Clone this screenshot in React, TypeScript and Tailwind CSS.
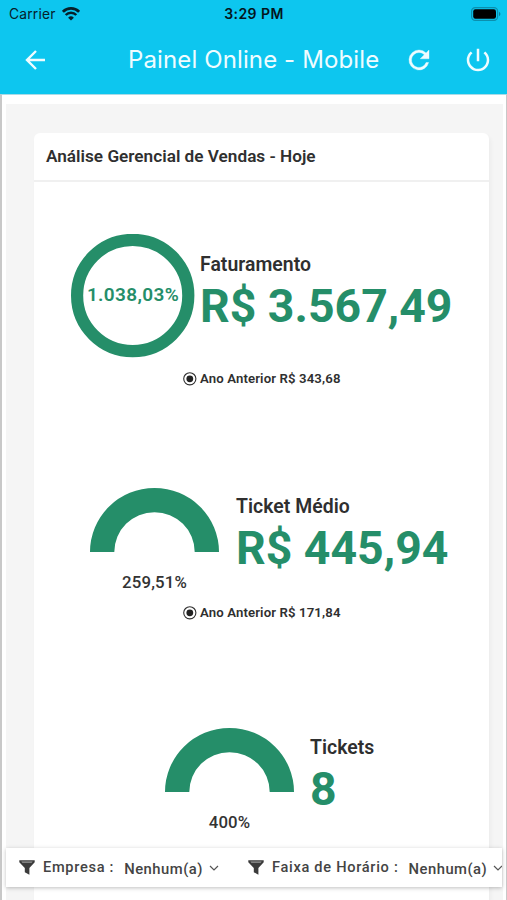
import type { ReactNode } from "react";
import { clsx } from "clsx";

const WifiIcon = () => (
  <svg className="w-[18px] h-[14px]" viewBox="0 0 18 14" fill="none" stroke="#06202a">
    <path d="M0.9 4.8a11.5 11.5 0 0 1 16.2 0" strokeWidth="2.8" />
    <path d="M3.7 8a7.4 7.4 0 0 1 10.6 0" strokeWidth="2.5" />
    <path d="M9 13.6 6.1 10.7a4.1 4.1 0 0 1 5.8 0z" fill="#06202a" stroke="none" />
  </svg>
);

const BatteryIcon = () => (
  <svg className="w-[30px] h-[14px]" viewBox="0 0 30 14">
    <rect x="0.6" y="0.6" width="26" height="12.8" rx="3.6" fill="none" stroke="#0b8fae" strokeWidth="1.2" />
    <rect x="2.2" y="2.2" width="22.8" height="9.6" rx="2.2" fill="#000" />
    <path d="M28 4.8c1.9.8 1.9 3.6 0 4.4z" fill="#0b7f9b" />
  </svg>
);

const FilterIcon = () => (
  <svg className="w-4 h-[15px] shrink-0" viewBox="0 0 16 15">
    <path d="M0.3 0.3h15.4v1.9L10.4 8v6.8l-4.6-2.6V8L0.3 2.2z" fill="#3b3b3b" />
    <path d="M2.4 1.6h11.2l-.9 1.2H3.3z" fill="#999" />
  </svg>
);

const Ring = ({ label }: { label: string }) => (
  <div className="relative w-[124px] h-[124px] shrink-0 flex items-center justify-center">
    <svg className="absolute inset-0" viewBox="0 0 124 124">
      <circle cx="61.7" cy="61.5" r="55.6" fill="none" stroke="#258e69" strokeWidth="12.2" />
    </svg>
    <span className="relative -mt-[2px] text-[19px] leading-5 font-semibold text-[#258e69] whitespace-nowrap tracking-[0.35px]">{label}</span>
  </div>
);

const Gauge = ({ label }: { label: string }) => (
  <div className="w-[129px] shrink-0 flex flex-col items-center">
    <svg className="w-[129px] h-16" viewBox="0 0 129 64">
      <path d="M0 64a64.5 64 0 0 1 129 0h-24.3a40.2 39.8 0 0 0-80.4 0z" fill="#258e69" />
    </svg>
    <span className="mt-5 text-[16.8px] leading-5 font-medium text-[#333] tracking-[0.15px]">{label}</span>
  </div>
);

type MetricProps = {
  title: string;
  value: string;
  chart: ReactNode;
  previous?: string;
  className?: string;
  textClassName?: string;
};

const Metric = ({ title, value, chart, previous, className, textClassName }: MetricProps) => (
  <section>
    <div className={clsx("flex items-start", className)}>
      {chart}
      <div className={clsx("whitespace-nowrap", textClassName)}>
        <h3 className="text-[19.4px] leading-6 font-semibold text-[#2f2f2f] tracking-[0.05px]">{title}</h3>
        <p className="text-[46.4px] leading-[59px] font-bold text-[#258e69]">{value}</p>
      </div>
    </div>
    {previous && (
      <div className="flex items-center pl-[149px] gap-[3px] h-4">
        <svg className="w-[14px] h-[14px]" viewBox="0 0 14 14">
          <circle cx="6.8" cy="6.8" r="6.1" fill="none" stroke="#2f2f2f" strokeWidth="1.1" />
          <circle cx="6.8" cy="6.8" r="3.4" fill="#222" />
        </svg>
        <span className="text-[13.2px] leading-4 font-semibold text-[#2f2f2f] whitespace-nowrap tracking-[0.12px]">{previous}</span>
      </div>
    )}
  </section>
);

const Filter = ({ label, className }: { label: string; className?: string }) => (
  <div className={clsx("flex items-center shrink-0 text-[#444] font-medium", className)}>
    <FilterIcon />
    <span className="ml-2 mb-[2px] text-[14.6px] leading-5 tracking-[0.7px] whitespace-nowrap">{label} :</span>
    <span className="ml-[10px] mt-[2px] text-[14.8px] leading-5 tracking-[0.5px] whitespace-nowrap">Nenhum(a)</span>
    <svg className="w-[10px] h-[6px] ml-[6px] mt-[1px] shrink-0" viewBox="0 0 10 6">
      <path d="M1 1l4 4 4-4" fill="none" stroke="#555" strokeWidth="1.2" />
    </svg>
  </div>
);

export default function App() {
  return (
    <div className="relative w-[507px] h-[900px] overflow-hidden bg-white font-['Roboto',sans-serif]">
      <header className="h-[94px] bg-[#0dc6ef] font-['Inter',sans-serif]">
        {/* Status bar */}
        <div className="h-7 grid grid-cols-3 items-center pl-[9px] pr-[6px] text-[13.8px] leading-5 text-[#06202a]">
          <div className="flex items-center gap-[6px]">
            <span className="tracking-[0.2px]">Carrier</span>
            <WifiIcon />
          </div>
          <span className="-ml-[2px] text-center text-[14px] font-semibold tracking-[0.45px] text-[#04151c]">3:29 PM</span>
          <div className="flex justify-end">
            <BatteryIcon />
          </div>
        </div>

        {/* Navigation bar */}
        <div className="h-16 flex items-center pl-[25px] text-[#effcff]">
          <svg className="w-5 h-5" viewBox="0 0 20 20" fill="none" stroke="currentColor" strokeWidth="2.4">
            <path d="M20 10H2M11 1L2 10l9 9" />
          </svg>
          <h1 className="ml-[83px] w-[252px] text-[24px] leading-8 font-normal whitespace-nowrap tracking-[0.12px]">Painel Online - Mobile</h1>
          <svg className="ml-6 w-[30px] h-[30px]" viewBox="0 0 24 24" fill="currentColor">
            <path d="M17.65 6.35A7.96 7.96 0 0 0 12 4a8 8 0 1 0 7.73 10h-2.08A6 6 0 1 1 12 6c1.66 0 3.14.69 4.22 1.78L13 11h7V4z" stroke="currentColor" strokeWidth="0.3" />
          </svg>
          <svg className="ml-[29px] w-[30px] h-[30px]" viewBox="0 0 24 24" fill="currentColor">
            <path d="M13 3h-2v10h2V3zm4.83 2.17l-1.42 1.42A6.92 6.92 0 0 1 19 12a7 7 0 1 1-11.42-5.42L6.17 5.17A8.93 8.93 0 0 0 3 12a9 9 0 1 0 18 0c0-2.74-1.23-5.18-3.17-6.83z" />
          </svg>
        </div>
      </header>

      <main className="h-[806px] border-t border-l-2 border-r border-t-[#a9dbe7] border-x-[#c8c8c8] pt-[9px] pl-1 pr-[3px]">
        <div className="h-full bg-[#f5f5f5] pt-[29px] pl-7 pr-[14px]">
          <div className="h-full w-[455px] bg-white rounded-t-md shadow-[2px_3px_4px_rgba(0,0,0,0.04)]">
            <h2 className="h-[49px] border-b-2 border-[#f0f0f0] pl-3 pt-[13px] text-[17.2px] leading-5 font-semibold text-[#2f2f2f]">
              Análise Gerencial de Vendas - Hoje
            </h2>

            <Metric
              title="Faturamento"
              value="R$ 3.567,49"
              previous="Ano Anterior R$ 343,68"
              chart={<Ring label="1.038,03%" />}
              className="pt-[52px] pl-[37px] h-[189px]"
              textClassName="ml-[5px] pt-[19px]"
            />
            <Metric
              title="Ticket Médio"
              value="R$ 445,94"
              previous="Ano Anterior R$ 171,84"
              chart={<Gauge label="259,51%" />}
              className="pt-[101px] pl-14 h-[218px]"
              textClassName="ml-[17px] pt-[7px]"
            />
            <Metric
              title="Tickets"
              value="8"
              chart={<Gauge label="400%" />}
              className="pt-[107px] pl-[131px]"
              textClassName="ml-4 pt-2"
            />
          </div>
        </div>
      </main>

      {/* Filter bar pinned over the dashboard */}
      <div className="absolute left-[6px] bottom-[13px] w-[496px] h-[39px] bg-white overflow-hidden flex items-center pl-[13px] shadow-[0_1px_4px_rgba(0,0,0,0.25)]">
        <Filter label="Empresa" />
        <Filter label="Faixa de Horário" className="ml-[29px]" />
      </div>
    </div>
  );
}
